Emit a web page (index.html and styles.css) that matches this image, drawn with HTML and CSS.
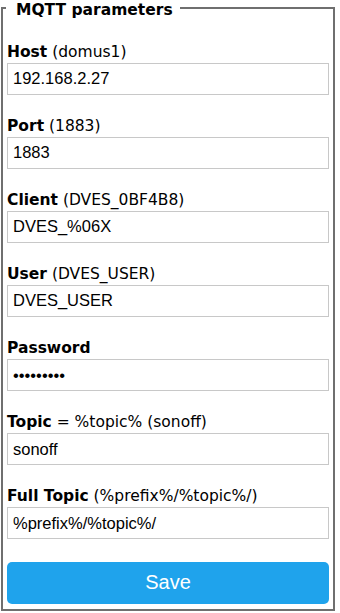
FILE: index.html
```html
<!DOCTYPE html>
<html lang="en">
<head>
    <meta charset="UTF-8">
    <meta name="viewport" content="width=device-width, initial-scale=1.0">
    <title>MQTT parameters</title>
    <link rel="stylesheet" href="styles.css">
</head>
<body>
    <form class="settings">
        <fieldset class="group">
            <legend class="group-title">MQTT parameters</legend>
            <div class="fields">
                <label class="field">
                    <span class="field-name"><b>Host</b> (domus1)</span>
                    <input class="field-input" type="text" value="192.168.2.27">
                </label>
                <label class="field">
                    <span class="field-name"><b>Port</b> (1883)</span>
                    <input class="field-input" type="text" value="1883">
                </label>
                <label class="field">
                    <span class="field-name"><b>Client</b> (DVES_0BF4B8)</span>
                    <input class="field-input" type="text" value="DVES_%06X">
                </label>
                <label class="field">
                    <span class="field-name"><b>User</b> (DVES_USER)</span>
                    <input class="field-input" type="text" value="DVES_USER">
                </label>
                <label class="field">
                    <span class="field-name"><b>Password</b></span>
                    <input class="field-input" type="password" value="*********">
                </label>
                <label class="field">
                    <span class="field-name"><b>Topic</b> = %topic% (sonoff)</span>
                    <input class="field-input" type="text" value="sonoff">
                </label>
                <label class="field">
                    <span class="field-name"><b>Full Topic</b> (%prefix%/%topic%/)</span>
                    <input class="field-input" type="text" value="%prefix%/%topic%/">
                </label>
            </div>
            <button class="save-button" type="button">Save</button>
        </fieldset>
    </form>
</body>
</html>
```

FILE: styles.css
```css
body {
    margin: 0;
    background-color: white;
    font-family: 'DejaVu Sans', Verdana, sans-serif;
    color: #000;
}

.settings {
    margin: 0;
}

.group {
    margin: 0 5px 0 1px;
    padding: 26.5px 4px 5px 4px;
    border: 2px solid #6f6f6f;
    min-width: 0;
}

.group-title {
    margin-left: -1px;
    padding: 4px 7px 0 10px;
    font-size: 15.5px;
    line-height: 12px;
    font-weight: bold;
}

.fields {
    display: flex;
    flex-direction: column;
    gap: 22.17px;
}

.field {
    display: flex;
    flex-direction: column;
    gap: 1px;
}

.field-name {
    font-size: 15.5px;
    line-height: 19px;
}

.field-input {
    box-sizing: border-box;
    width: 100%;
    height: 32px;
    margin: 0;
    padding: 0 5px;
    border: 1px solid #c8c8c8;
    border-radius: 0;
    font-family: 'Liberation Sans', Arial, sans-serif;
    font-size: 16.5px;
    color: #000;
    background-color: white;
}

.save-button {
    display: block;
    width: 100%;
    height: 42px;
    margin-top: 22.5px;
    border: none;
    border-radius: 5px;
    background-color: #1fa3ec;
    color: white;
    font-family: 'Liberation Sans', Arial, sans-serif;
    font-size: 20px;
    cursor: pointer;
}
```
